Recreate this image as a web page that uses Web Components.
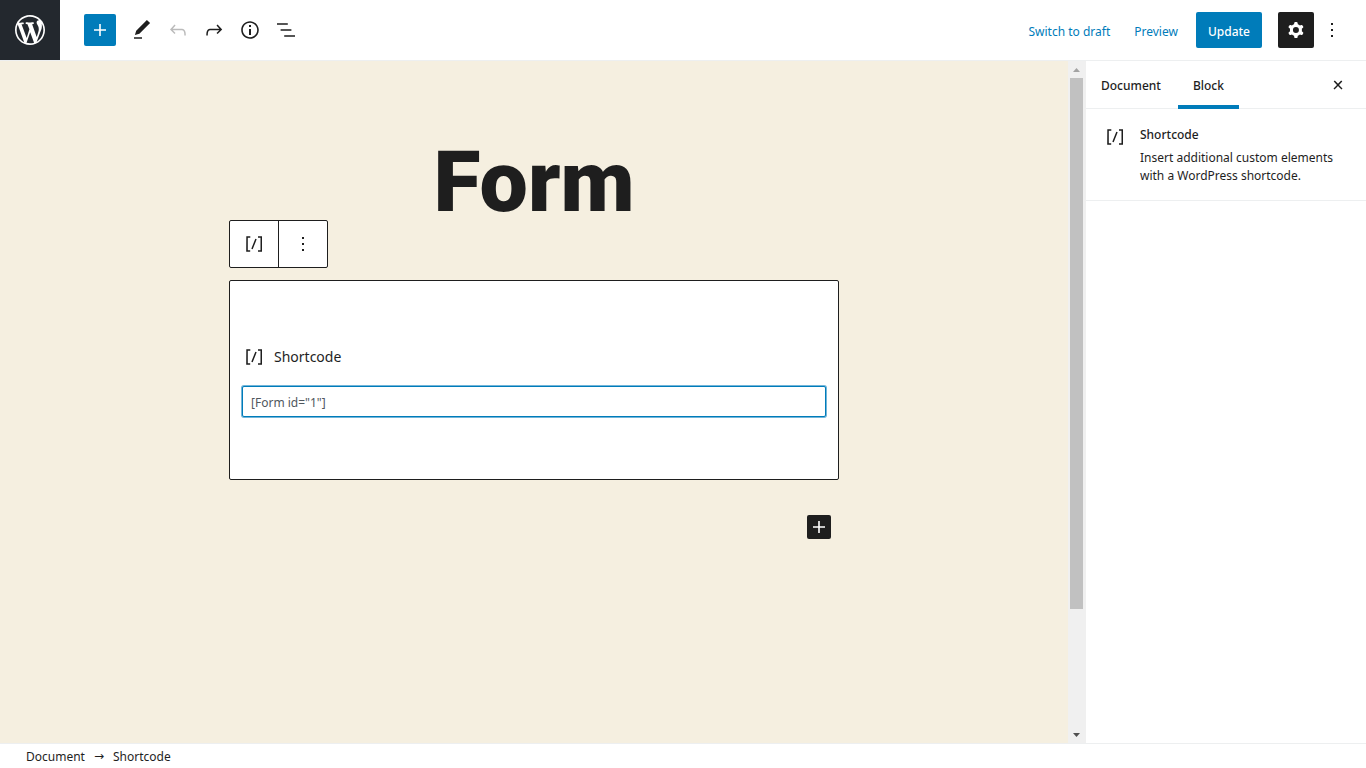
<!DOCTYPE html>
<html lang="en">
<head>
<meta charset="utf-8">
<title>Edit Page</title>
<style>
  body {
    margin: 0;
    font-family: "Noto Sans", "Open Sans", sans-serif;
    font-size: 12px;
    color: #1e1e1e;
    --blue: #007cba;
    --dark: #1e1e1e;
    --line: #edeff0;
    --canvas: #f5efe0;
  }
</style>
</head>
<body>
<editor-layout>
  <editor-header slot="header"></editor-header>
  <editor-canvas slot="content">
    <span slot="title">Form</span>
    <block-toolbar></block-toolbar>
    <shortcode-block value='[Form id="1"]'>Shortcode</shortcode-block>
    <block-appender></block-appender>
  </editor-canvas>
  <editor-sidebar slot="sidebar">
    <block-card icon="shortcode">
      <span slot="title">Shortcode</span>
      Insert additional custom elements with a WordPress shortcode.
    </block-card>
  </editor-sidebar>
  <editor-breadcrumb slot="footer"></editor-breadcrumb>
</editor-layout>

<script>
const ICONS = {
  plus: "M18 11.2h-5.2V6h-1.6v5.2H6v1.6h5.2V18h1.6v-5.2H18z",
  edit: "M20.1 5.1L16.9 2 6.2 12.7l-1.3 4.4 4.5-1.3L20.1 5.1zM4 20.8h8v-1.5H4v1.5z",
  undo: "M18.3 11.7c-.6-.6-1.4-.9-2.3-.9H6.7l2.9-3.3-1.1-1-4.5 5L8.5 16l1-1-2.7-2.7H16c.5 0 .9.2 1.3.5 1 1 1 3.4 1 4.5v.3h1.5v-.2c0-1.5 0-4.3-1.5-5.7z",
  redo: "M15.6 6.5l-1.1 1 2.9 3.3H8c-.9 0-1.7.3-2.3.9-1.4 1.5-1.4 4.2-1.4 5.6v.2h1.5v-.3c0-1.1 0-3.5 1-4.5.3-.3.7-.5 1.3-.5h9.2L14.5 15l1.1 1.1 4.6-4.6-4.6-5z",
  info: "M12 3.2c-4.8 0-8.8 3.9-8.8 8.8 0 4.8 3.9 8.8 8.8 8.8 4.8 0 8.8-3.9 8.8-8.8 0-4.8-4-8.8-8.8-8.8zm0 16c-4 0-7.2-3.3-7.2-7.2C4.8 8 8 4.8 12 4.8s7.2 3.3 7.2 7.2c0 4-3.2 7.2-7.2 7.2zM11 17h2v-6h-2v6zm0-8h2V7h-2v2z",
  list: "M13.8 5.2H3v1.5h10.8V5.2zm-3.6 12v1.5H21v-1.5H10.2zm7.2-6H6.6v1.5h10.8v-1.5z",
  cog: "M10.289 4.836A1 1 0 0111.275 4h1.306a1 1 0 01.987.836l.244 1.466c.787.26 1.503.679 2.108 1.218l1.393-.522a1 1 0 011.216.437l.653 1.13a1 1 0 01-.23 1.273l-1.148.944a6.025 6.025 0 010 2.435l1.149.946a1 1 0 01.23 1.272l-.653 1.13a1 1 0 01-1.216.437l-1.394-.522c-.605.54-1.32.958-2.108 1.218l-.244 1.466a1 1 0 01-.987.836h-1.306a1 1 0 01-.986-.836l-.244-1.466a5.995 5.995 0 01-2.108-1.218l-1.394.522a1 1 0 01-1.217-.436l-.653-1.131a1 1 0 01.23-1.272l1.149-.946a6.026 6.026 0 010-2.435l-1.148-.944a1 1 0 01-.23-1.272l.653-1.131a1 1 0 011.217-.437l1.393.522a5.994 5.994 0 012.108-1.218l.244-1.466zM14.929 12a3 3 0 11-6 0 3 3 0 016 0z",
  more: "M13 19h-2v-2h2v2zm0-6h-2v-2h2v2zm0-6h-2V5h2v2z",
  shortcode: "M16 4.2v1.5h2.5v12.5H16v1.5h4V4.2h-4zM4.2 19.8h4v-1.5H5.8V5.8h2.5V4.2h-4l-.1 15.6zm5.1-3.1l1.4.6 4-10-1.4-.6-4 10z",
  close: "M13 11.9l3.3-3.4-1.1-1-3.2 3.3-3.2-3.3-1.1 1 3.3 3.4-3.5 3.6 1 1L12 13l3.5 3.5 1-1z",
  wordpress: "M20 10c0-5.51-4.49-10-10-10C4.48 0 0 4.49 0 10c0 5.52 4.48 10 10 10 5.51 0 10-4.48 10-10zM7.78 15.37L4.37 6.22c.55-.02 1.17-.08 1.17-.08.5-.06.44-1.13-.06-1.11 0 0-1.45.11-2.37.11-.18 0-.37 0-.58-.01C4.12 2.69 6.87 1.11 10 1.11c2.33 0 4.45.87 6.05 2.34-.68-.11-1.65.39-1.65 1.58 0 .74.45 1.36.9 2.1.35.61.55 1.36.55 2.46 0 1.49-1.4 5-1.4 5l-3.03-8.37c.54-.02.82-.17.82-.17.5-.05.44-1.25-.06-1.22 0 0-1.44.12-2.38.12-.87 0-2.33-.12-2.33-.12-.5-.03-.56 1.2-.06 1.22l.92.08 1.26 3.41zM17.41 10c.24-.64.74-1.87.43-4.25.7 1.29 1.05 2.71 1.05 4.25 0 3.29-1.73 6.24-4.4 7.78.97-2.59 1.94-5.2 2.92-7.78zM6.1 18.09C3.12 16.65 1.11 13.53 1.11 10c0-1.3.23-2.48.72-3.59C3.25 10.3 4.67 14.2 6.1 18.09zm4.03-6.63l2.58 6.98c-.86.29-1.76.45-2.71.45-.79 0-1.57-.11-2.29-.33.81-2.38 1.62-4.74 2.42-7.1z",
};

// shared base: every element only gives its markup and its styles
class BaseElement extends HTMLElement {
  constructor() {
    super();
    this.attachShadow({ mode: "open" });
  }
  getStyles() {
    return "";
  }
  connectedCallback() {
    const template = document.createElement("template");
    template.innerHTML = `
      <style>
        * { box-sizing: border-box; }
        button, input { font: inherit; color: inherit; }
        button { margin: 0; padding: 0; border: 0; background: none; cursor: pointer; }
        ${this.getStyles()}
      </style>
      ${this.getTemplate()}
    `;
    this.shadowRoot.replaceChildren(template.content.cloneNode(true));
  }
}

class WpIcon extends BaseElement {
  getTemplate() {
    const name = this.getAttribute("name");
    const box = name === "wordpress" ? "-2 -2 24 24" : "0 0 24 24";
    return `<svg viewBox="${box}" aria-hidden="true"><path fill-rule="evenodd" d="${ICONS[name]}"/></svg>`;
  }
  getStyles() {
    return `
      :host { display: block; flex: none; width: var(--icon-size, 24px); height: var(--icon-size, 24px); }
      svg { display: block; width: 100%; height: 100%; fill: currentColor; }
    `;
  }
}

class EditorLayout extends BaseElement {
  getTemplate() {
    return `
      <slot name="header"></slot>
      <main>
        <slot name="content"></slot>
        <slot name="sidebar"></slot>
      </main>
      <slot name="footer"></slot>
    `;
  }
  getStyles() {
    return `
      :host { display: flex; flex-direction: column; height: 100vh; background: #fff; }
      main { display: flex; flex: 1; min-height: 0; }
    `;
  }
}

class EditorHeader extends BaseElement {
  getTemplate() {
    return `
      <a class="logo" href="#" aria-label="View Pages"><wp-icon name="wordpress"></wp-icon></a>
      <div class="tools">
        <button class="add" aria-label="Add block"><wp-icon name="plus"></wp-icon></button>
        <button class="tool" aria-label="Tools"><wp-icon name="edit"></wp-icon></button>
        <button class="tool" aria-label="Undo" disabled><wp-icon name="undo"></wp-icon></button>
        <button class="tool" aria-label="Redo"><wp-icon name="redo"></wp-icon></button>
        <button class="tool" aria-label="Content structure"><wp-icon name="info"></wp-icon></button>
        <button class="tool" aria-label="Block navigation"><wp-icon name="list"></wp-icon></button>
      </div>
      <div class="settings">
        <button class="link">Switch to draft</button>
        <button class="link">Preview</button>
        <button class="primary">Update</button>
        <button class="tool pressed" aria-label="Settings"><wp-icon name="cog"></wp-icon></button>
        <button class="tool" aria-label="Options"><wp-icon name="more"></wp-icon></button>
      </div>
    `;
  }
  getStyles() {
    return `
      :host { display: flex; align-items: center; flex: none; background: #fff; border-bottom: 1px solid var(--line); }
      .logo {
        display: grid; place-items: center; width: 60px; height: 60px;
        background: #23282e; color: #fff; --icon-size: 36px;
      }
      .tools, .settings { display: flex; align-items: center; }
      .tools { padding-left: 24px; }
      .settings { margin-left: auto; padding-right: 16px; }
      .tool { display: grid; place-items: center; width: 36px; height: 36px; border-radius: 2px; }
      .tool:disabled { color: #bbb; }
      .add {
        display: grid; place-items: center; width: 32px; height: 32px; margin-right: 8px;
        border-radius: 2px; background: var(--blue); color: #fff;
      }
      .link { height: 36px; padding: 2px 12px 0; color: var(--blue); }
      .primary {
        height: 36px; margin: 0 16px 0 6px; padding: 2px 12px 0;
        border-radius: 2px; background: var(--blue); color: #fff; font-weight: 500;
      }
      .pressed { background: var(--dark); color: #fff; }
    `;
  }
}

class EditorCanvas extends BaseElement {
  getTemplate() {
    return `
      <div class="page">
        <h1><slot name="title"></slot></h1>
        <slot></slot>
      </div>
      <scroll-track></scroll-track>
    `;
  }
  getStyles() {
    return `
      :host { display: flex; flex: 1; min-width: 0; background: var(--canvas); }
      .page { flex: 1; max-width: 610px; margin: 0 auto; padding-top: 83px; }
      h1 {
        margin: 0; text-align: center;
        font-family: Roboto, "Liberation Sans", sans-serif; font-size: 86px; line-height: 76px; font-weight: 900;
      }
    `;
  }
}

class ScrollTrack extends BaseElement {
  getTemplate() {
    return `
      <svg viewBox="0 0 7 4"><path fill="#a3a3a3" d="M0 4L3.500 0 7 4z"/></svg>
      <div class="track"><div class="thumb"></div></div>
      <svg viewBox="0 0 7 4"><path fill="#505050" d="M0 0L3.500 4 7 0z"/></svg>
    `;
  }
  getStyles() {
    return `
      :host {
        display: flex; flex-direction: column; align-items: center; flex: none;
        box-sizing: border-box; width: 18px; padding-right: 1px; background: #f0f0f0;
      }
      svg { flex: none; width: 7px; height: 4px; margin: 7px 0 6px; }
      .track { flex: 1; width: 13px; }
      .thumb { height: 82%; background: #c1c1c1; }
    `;
  }
}

class BlockToolbar extends BaseElement {
  getTemplate() {
    return `
      <button aria-label="Change block type"><wp-icon name="shortcode"></wp-icon></button>
      <button aria-label="More options"><wp-icon name="more"></wp-icon></button>
    `;
  }
  getStyles() {
    return `
      :host {
        display: flex; width: max-content; margin-bottom: 12px;
        border: 1px solid var(--dark); border-radius: 2px; background: #fff;
      }
      button { display: grid; place-items: center; width: 48px; height: 46px; }
      button + button { width: 49px; border-left: 1px solid var(--dark); }
    `;
  }
}

class ShortcodeBlock extends BaseElement {
  getTemplate() {
    return `
      <label for="code"><wp-icon name="shortcode"></wp-icon><slot></slot></label>
      <input id="code" type="text">
    `;
  }
  getStyles() {
    return `
      :host {
        display: flex; flex-direction: column; gap: 17px; min-height: 200px; padding: 64px 12px 60px;
        box-sizing: border-box; border: 1px solid var(--dark); border-radius: 2px; background: #fff;
      }
      label { display: flex; align-items: center; gap: 8px; font-size: 14px; line-height: 24px; }
      input {
        width: 100%; height: 31px; padding: 2px 8px 0; color: #50575e; outline: 0;
        border: 1px solid var(--blue); border-radius: 2px; background: #fff;
        box-shadow: 0 0 0 1px #72b5d9;
      }
    `;
  }
  connectedCallback() {
    super.connectedCallback();
    this.shadowRoot.querySelector("input").value = this.getAttribute("value");
  }
}

class BlockAppender extends BaseElement {
  getTemplate() {
    return `<button aria-label="Add block"><wp-icon name="plus"></wp-icon></button>`;
  }
  getStyles() {
    return `
      :host { display: flex; justify-content: flex-end; padding: 35px 8px 0; }
      button { border-radius: 2px; background: var(--dark); color: #fff; }
    `;
  }
}

class EditorSidebar extends BaseElement {
  getTemplate() {
    return `
      <nav>
        <button>Document</button>
        <button class="active">Block</button>
        <button class="close" aria-label="Close settings"><wp-icon name="close"></wp-icon></button>
      </nav>
      <slot></slot>
    `;
  }
  getStyles() {
    return `
      :host { display: block; flex: none; width: 280px; background: #fff; }
      nav { display: flex; gap: 2px; height: 48px; border-bottom: 1px solid var(--line); }
      nav button { height: 48px; padding: 0 15px; font-weight: 500; }
      nav .active { box-shadow: inset 0 -4px var(--blue); }
      nav .close { margin-left: auto; padding: 0 16px; }
    `;
  }
}

class BlockCard extends BaseElement {
  getTemplate() {
    return `
      <wp-icon name="${this.getAttribute("icon")}"></wp-icon>
      <div>
        <h2><slot name="title"></slot></h2>
        <p><slot></slot></p>
      </div>
    `;
  }
  getStyles() {
    return `
      :host { display: flex; align-items: flex-start; gap: 13px; padding: 16px 17px 15px; border-bottom: 1px solid var(--line); }
      h2 { margin: 0 0 4px; font-size: 12px; line-height: 20px; font-weight: 500; }
      p { margin: 0; line-height: 18px; }
    `;
  }
}

class EditorBreadcrumb extends BaseElement {
  getTemplate() {
    return `
      <button>Document</button>
      <span aria-hidden="true">→</span>
      <button>Shortcode</button>
    `;
  }
  getStyles() {
    return `
      :host {
        display: flex; align-items: center; gap: 9px; flex: none; height: 24px;
        padding: 0 26px; border-top: 1px solid var(--line); background: #fff;
      }
      span { font-family: "DejaVu Sans", sans-serif; }
    `;
  }
}

customElements.define("wp-icon", WpIcon);
customElements.define("editor-layout", EditorLayout);
customElements.define("editor-header", EditorHeader);
customElements.define("editor-canvas", EditorCanvas);
customElements.define("scroll-track", ScrollTrack);
customElements.define("block-toolbar", BlockToolbar);
customElements.define("shortcode-block", ShortcodeBlock);
customElements.define("block-appender", BlockAppender);
customElements.define("editor-sidebar", EditorSidebar);
customElements.define("block-card", BlockCard);
customElements.define("editor-breadcrumb", EditorBreadcrumb);
</script>
</body>
</html>
